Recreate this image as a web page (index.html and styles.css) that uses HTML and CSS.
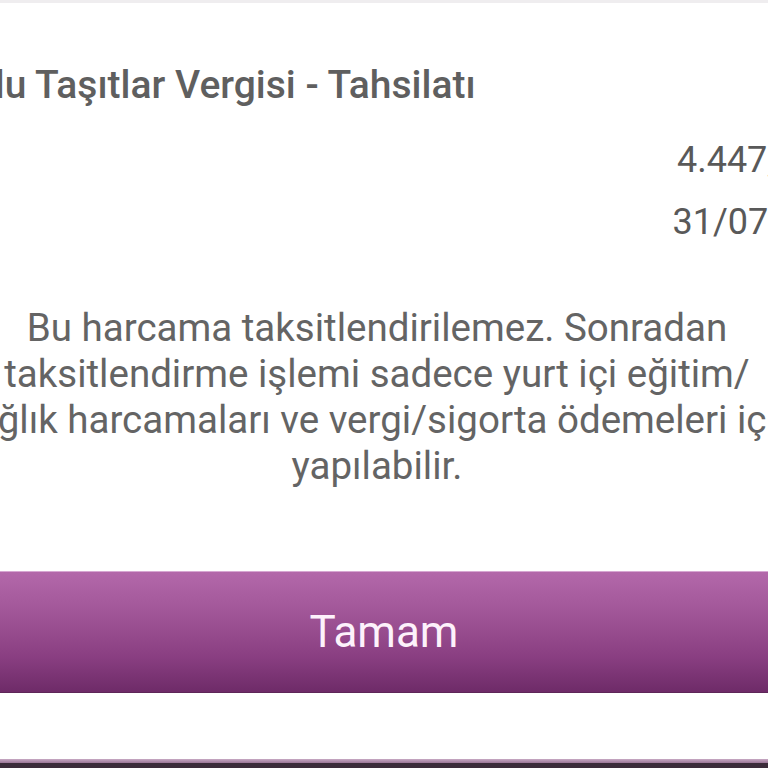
FILE: index.html
```html
<!DOCTYPE html>
<html lang="tr">
<head>
  <meta charset="UTF-8">
  <meta name="viewport" content="width=device-width, initial-scale=1.0">
  <title>Taksit</title>
  <link rel="stylesheet" href="styles.css">
</head>
<body>
  <div class="top-bar"></div>

  <div class="dialog">
    <h2 class="title">Motorlu Taşıtlar Vergisi - Tahsilatı</h2>

    <div class="details">
      <div class="row">
        <span class="label">Tutar</span>
        <span class="value">4.447,00 TL</span>
      </div>
      <div class="row">
        <span class="label">Tarih</span>
        <span class="value">31/07/2023</span>
      </div>
    </div>

    <p class="message">
      Bu harcama taksitlendirilemez. Sonradan<br>
      taksitlendirme işlemi sadece yurt içi eğitim/<br>
      sağlık harcamaları ve vergi/sigorta ödemeleri için<br>
      yapılabilir.
    </p>
  </div>

  <button type="button" class="ok-button">Tamam</button>

  <div class="bottom-space"></div>
  <div class="bottom-bar"></div>
</body>
</html>
```

FILE: styles.css
```css
body {
  margin: 0;
  padding: 0;
  width: 768px;
  height: 768px;
  overflow: hidden;
  background-color: #ffffff;
  font-family: Roboto, "Noto Sans", sans-serif;
  color: #5e5e5e;
}

.top-bar {
  height: 3px;
  background-color: #efedef;
}

.dialog {
  width: 974px;
  margin-left: -134px;
  padding: 0 24px;
}

.title {
  margin: 58px 0 0;
  font-size: 39px;
  line-height: 48px;
  font-weight: 500;
  color: #5f5f5f;
  white-space: nowrap;
}

.details {
  margin-top: 20px;
}

.row {
  display: flex;
  justify-content: space-between;
  height: 62px;
  line-height: 62px;
  font-size: 36px;
  color: #595959;
}

.message {
  margin: 52px 0 0;
  font-size: 38.5px;
  line-height: 46px;
  text-align: center;
  white-space: nowrap;
  color: #646464;
}

.ok-button {
  display: block;
  width: 100%;
  height: 122px;
  margin-top: 82px;
  padding: 0;
  border: none;
  border-top: 1px solid #d7a7d2;
  border-bottom: 1px solid #5e2658;
  background: linear-gradient(#b368aa, #a05597 35%, #8a3f82 70%, #6e2b68);
  color: #fdf2fb;
  font-family: Roboto, "Noto Sans", sans-serif;
  font-size: 44px;
  cursor: pointer;
}

.bottom-space {
  height: 66px;
}

.bottom-bar {
  height: 4px;
  background: linear-gradient(#c8a9c4, #9a7596);
}

body::after {
  content: "";
  display: block;
  height: 10px;
  background-color: #3b2b39;
}
```
